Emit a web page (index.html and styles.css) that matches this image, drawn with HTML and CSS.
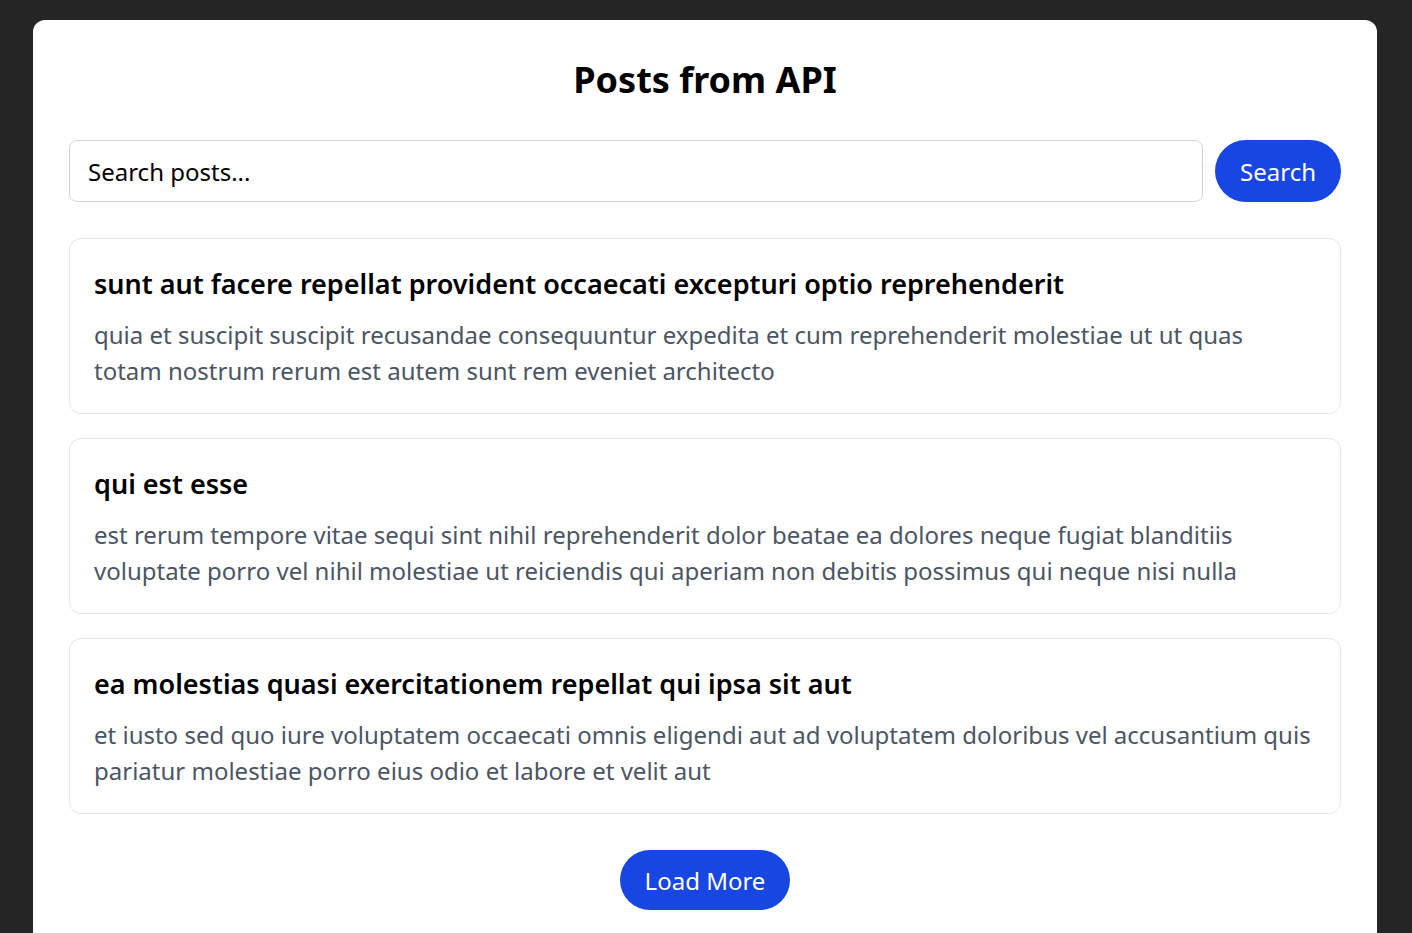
FILE: index.html
```html
<!DOCTYPE html>
<html lang="en">
<head>
<meta charset="utf-8">
<title>Posts from API</title>
<link rel="stylesheet" href="styles.css">
</head>
<body>
<main class="panel">
  <h1 class="title">Posts from API</h1>
  <form class="search-row" onsubmit="return false">
    <input class="search-input" type="text" placeholder="Search posts...">
    <button class="btn" type="submit">Search</button>
  </form>
  <section class="posts">
    <article class="post">
      <h2 class="post-title">sunt aut facere repellat provident occaecati excepturi optio reprehenderit</h2>
      <p class="post-body">quia et suscipit suscipit recusandae consequuntur expedita et cum reprehenderit molestiae ut ut quas totam nostrum rerum est autem sunt rem eveniet architecto</p>
    </article>
    <article class="post">
      <h2 class="post-title">qui est esse</h2>
      <p class="post-body">est rerum tempore vitae sequi sint nihil reprehenderit dolor beatae ea dolores neque fugiat blanditiis voluptate porro vel nihil molestiae ut reiciendis qui aperiam non debitis possimus qui neque nisi nulla</p>
    </article>
    <article class="post">
      <h2 class="post-title">ea molestias quasi exercitationem repellat qui ipsa sit aut</h2>
      <p class="post-body">et iusto sed quo iure voluptatem occaecati omnis eligendi aut ad voluptatem doloribus vel accusantium quis pariatur molestiae porro eius odio et labore et velit aut</p>
    </article>
  </section>
  <div class="more">
    <button class="btn btn-more" type="button">Load More</button>
  </div>
</main>
</body>
</html>
```

FILE: styles.css
```css
* { box-sizing: border-box; }
html, body { margin: 0; }
body {
  background: #252525;
  font-family: "Noto Sans", "Open Sans", sans-serif;
  color: #000;
  padding: 20px 35px 0 33px;
}
.panel {
  background: #fff;
  border-radius: 12px 12px 0 0;
  padding: 36px 36px 40px;
}
.title {
  margin: 0 0 36px;
  text-align: center;
  font-size: 36px;
  font-weight: 700;
  line-height: 48px;
}
.search-row {
  display: flex;
  gap: 12px;
  margin: 0 0 36px;
}
.search-input {
  flex: 1;
  height: 62px;
  padding: 0 18px;
  border: 1px solid #d1d5db;
  border-radius: 8px;
  font-family: inherit;
  font-size: 24px;
  color: #000;
  outline: none;
}
.search-input::placeholder { color: #000; opacity: 1; }
.btn {
  height: 62px;
  padding: 0 25px;
  border: none;
  border-radius: 9999px;
  background: #1746e3;
  color: #fff;
  font-family: inherit;
  font-size: 24px;
  cursor: pointer;
}
.posts {
  display: flex;
  flex-direction: column;
  gap: 24px;
}
.post {
  border: 1px solid #e5e7eb;
  border-radius: 12px;
  padding: 24px;
}
.post-title {
  margin: 0 0 12px;
  font-size: 27px;
  font-weight: 600;
  line-height: 42px;
}
.post-body {
  margin: 0;
  font-size: 24px;
  line-height: 36px;
  color: #4b5563;
}
.more {
  display: flex;
  justify-content: center;
  margin-top: 36px;
}
.btn-more { height: 60px; }
```
